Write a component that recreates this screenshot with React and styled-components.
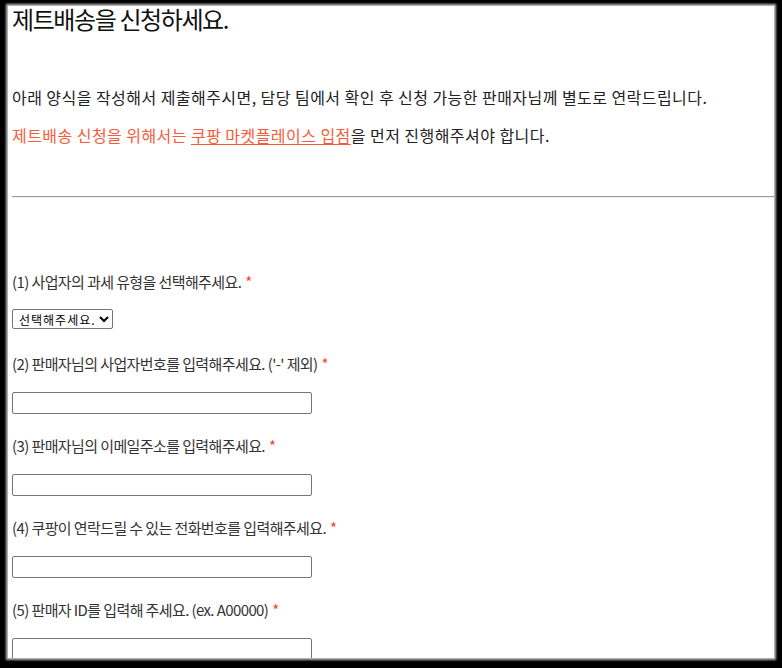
import styled, { createGlobalStyle } from "styled-components";

const GlobalStyle = createGlobalStyle`
  html, body {
    margin: 0;
    padding: 0;
    background: #000;
  }
  body {
    font-family: "Noto Sans CJK KR", "Noto Sans", sans-serif;
    color: #222;
  }
`;

const Frame = styled.div`
  width: 782px;
  height: 668px;
  box-sizing: border-box;
  padding: 6px 8px 10px 8px;
  overflow: hidden;
`;

const Sheet = styled.div`
  height: 100%;
  background: #fff;
  box-shadow: 0 0 2px 2px #bbb;
  padding-left: 4px;
  overflow: hidden;
`;

const Title = styled.h1`
  margin: 0;
  padding-top: 1px;
  font-size: 24px;
  line-height: 24px;
  font-weight: 400;
  letter-spacing: -1.4px;
  color: #111;
`;

const Intro = styled.p`
  margin: ${(p) => p.$top}px 0 0;
  font-size: 16px;
  line-height: 24px;
  letter-spacing: 0.45px;
  color: #222;
`;

const Warn = styled.span`
  color: #f85a3a;
`;

const WarnLink = styled.a`
  color: #f85a3a;
  text-decoration: underline;
  text-underline-offset: 2px;
`;

const Divider = styled.hr`
  margin: 49px 0 0;
  border: 0;
  border-top: 1px solid #9a9a9a;
  border-bottom: 1px solid #eee;
`;

const Form = styled.form`
  margin-top: 74px;
  display: flex;
  flex-direction: column;
  gap: 22px;
`;

const Field = styled.div`
  display: flex;
  flex-direction: column;
  align-items: flex-start;
  gap: ${(p) => (p.$select ? 17 : 18)}px;
  margin-bottom: ${(p) => (p.$select ? 3 : 0)}px;
`;

const Label = styled.label`
  font-size: 15px;
  line-height: 20px;
  letter-spacing: -0.6px;
  color: #333;
`;

const Required = styled.span`
  color: #f04a2a;
  margin-left: 4px;
`;

const Select = styled.select`
  height: 20px;
  width: 101px;
  box-sizing: border-box;
  font-family: "Noto Sans CJK KR", sans-serif;
  font-size: 12px;
  letter-spacing: 1px;
  color: #000;
  border: 1px solid #767676;
  border-radius: 2px;
  background: #fff;
  padding: 0 0 0 2px;
`;

const Input = styled.input`
  width: 300px;
  height: 22px;
  box-sizing: border-box;
  border: 1px solid #767676;
  border-radius: 2px;
  background: #fff;
  padding: 0 4px;
`;

const fields = [
  { label: "(1) 사업자의 과세 유형을 선택해주세요.", select: true },
  { label: "(2) 판매자님의 사업자번호를 입력해주세요. ('-' 제외)" },
  { label: "(3) 판매자님의 이메일주소를 입력해주세요." },
  { label: "(4) 쿠팡이 연락드릴 수 있는 전화번호를 입력해주세요." },
  { label: "(5) 판매자 ID를 입력해 주세요. (ex. A00000)" },
];

export default function App() {
  return (
    <>
      <GlobalStyle />
      <Frame>
        <Sheet>
          <Title>제트배송을 신청하세요.</Title>
          <Intro $top={54}>
            아래 양식을 작성해서 제출해주시면, 담당 팀에서 확인 후 신청 가능한 판매자님께 별도로 연락드립니다.
          </Intro>
          <Intro $top={14}>
            <Warn>제트배송 신청을 위해서는 </Warn>
            <WarnLink href="#">쿠팡 마켓플레이스 입점</WarnLink>을 먼저 진행해주셔야 합니다.
          </Intro>
          <Divider />
          <Form>
            {fields.map((f) => (
              <Field key={f.label} $select={f.select}>
                <Label>
                  {f.label}
                  <Required>*</Required>
                </Label>
                {f.select ? (
                  <Select defaultValue="">
                    <option value="">선택해주세요.</option>
                    <option value="general">일반과세자</option>
                    <option value="simple">간이과세자</option>
                  </Select>
                ) : (
                  <Input type="text" />
                )}
              </Field>
            ))}
          </Form>
        </Sheet>
      </Frame>
    </>
  );
}
